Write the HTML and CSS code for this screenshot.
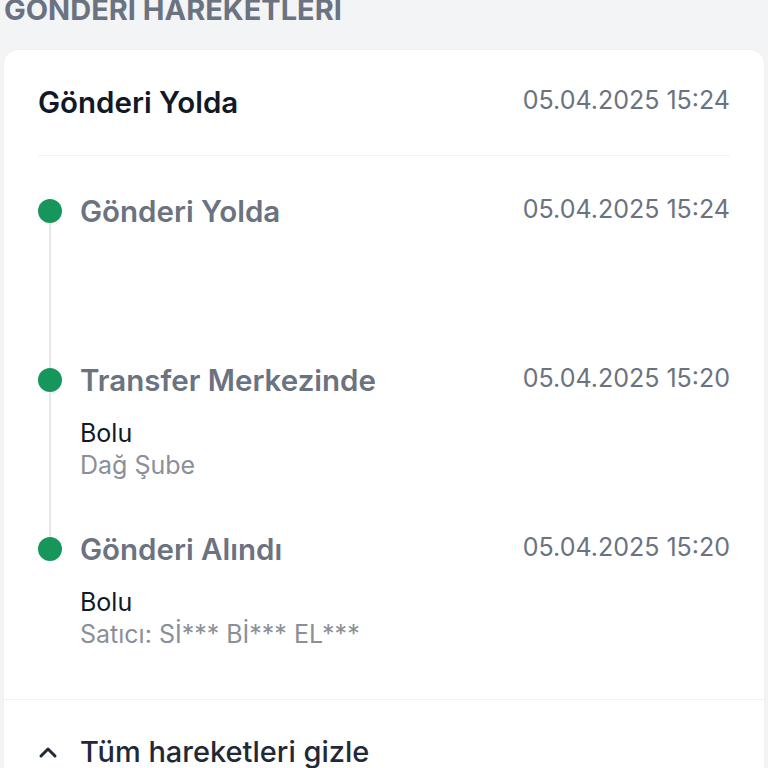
FILE: index.html
```html
<!DOCTYPE html>
<html lang="tr">
<head>
<meta charset="utf-8">
<link rel="stylesheet" href="styles.css">
</head>
<body>
<h2 class="section-title">GÖNDERI HAREKETLERI</h2>
<div class="card">
  <div class="card-head">
    <div class="head-title">Gönderi Yolda</div>
    <div class="date">05.04.2025 15:24</div>
  </div>
  <div class="divider inset"></div>
  <ul class="timeline">
    <li class="item">
      <span class="dot"></span>
      <div class="item-body">
        <div class="item-row">
          <div class="item-title">Gönderi Yolda</div>
          <div class="date">05.04.2025 15:24</div>
        </div>
      </div>
    </li>
    <li class="item">
      <span class="dot"></span>
      <div class="item-body">
        <div class="item-row">
          <div class="item-title">Transfer Merkezinde</div>
          <div class="date">05.04.2025 15:20</div>
        </div>
        <div class="sub">
          <div class="sub-main">Bolu</div>
          <div class="sub-muted">Dağ Şube</div>
        </div>
      </div>
    </li>
    <li class="item last">
      <span class="dot"></span>
      <div class="item-body">
        <div class="item-row">
          <div class="item-title">Gönderi Alındı</div>
          <div class="date">05.04.2025 15:20</div>
        </div>
        <div class="sub">
          <div class="sub-main">Bolu</div>
          <div class="sub-muted">Satıcı: Sİ*** Bİ*** EL***</div>
        </div>
      </div>
    </li>
  </ul>
  <div class="divider"></div>
  <div class="footer">
    <svg class="chev" width="20" height="14" viewBox="0 0 20 14"><path d="M3 11 L10 4 L17 11" fill="none" stroke="#1f2937" stroke-width="3" stroke-linecap="round" stroke-linejoin="round"/></svg>
    <span class="footer-text">Tüm hareketleri gizle</span>
  </div>
</div>
</body>
</html>
```
FILE: styles.css
```css
* { box-sizing: border-box; }
html, body { margin: 0; padding: 0; }
body {
  background: #f3f4f6;
  font-family: Inter, "Noto Sans", sans-serif;
  width: 768px;
  height: 768px;
  overflow: hidden;
}
.section-title {
  margin: -10px 0 0 4px;
  height: 60px;
  font-size: 29px;
  line-height: 40px;
  font-weight: 700;
  color: #6b7280;
  letter-spacing: 0;
}
.card {
  margin: 0 4px;
  background: #fff;
  border-radius: 14px;
  box-shadow: 0 0 3px rgba(0,0,0,0.05);
  height: 760px;
}
.card-head {
  display: flex;
  justify-content: space-between;
  align-items: center;
  padding: 34px 34px 35px;
}
.head-title {
  font-size: 29.5px;
  line-height: 36px;
  font-weight: 600;
  color: #111827;
}
.date {
  font-size: 25px;
  line-height: 36px;
  color: #6b7280;
}
.card-head .date { margin-top: -4px; }
.divider {
  height: 1px;
  background: #f1f2f4;
}
.divider.inset { margin: 0 34px; }
.timeline {
  list-style: none;
  margin: 0;
  padding: 37px 34px 0 34px;
}
.item {
  position: relative;
  display: flex;
  gap: 18px;
  min-height: 169px;
}
.item.last { min-height: 168px; }
.item::before {
  content: "";
  position: absolute;
  left: 11px;
  top: 18px;
  height: 169px;
  width: 2px;
  background: #e3e8ec;
}
.item.last::before { display: none; }
.dot {
  position: relative;
  flex: none;
  width: 24px;
  height: 24px;
  margin-top: 6px;
  border-radius: 50%;
  background: #17965c;
}
.item-body { flex: 1; }
.item-row {
  display: flex;
  justify-content: space-between;
  align-items: center;
}
.item-row .date { margin-top: -4px; }
.item-title {
  font-size: 29.5px;
  line-height: 36px;
  font-weight: 600;
  color: #6b7280;
}
.sub { margin-top: 19px; }
.sub-main {
  font-size: 25px;
  line-height: 32px;
  color: #111827;
}
.sub-muted {
  font-size: 25px;
  line-height: 32px;
  color: #8b9098;
}
.footer {
  display: flex;
  align-items: center;
  gap: 22px;
  padding: 34px 34px 0 34px;
}
.chev { flex: none; }
.footer-text {
  font-size: 29px;
  line-height: 36px;
  font-weight: 500;
  color: #1f2937;
}
```
